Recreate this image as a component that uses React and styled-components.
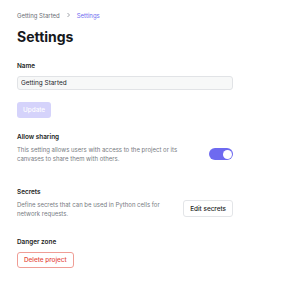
import React from "react";
import styled, { createGlobalStyle } from "styled-components";

const GlobalStyle = createGlobalStyle`
  body {
    margin: 0;
    background: #ffffff;
    font-family: Inter, "Noto Sans", sans-serif;
    -webkit-font-smoothing: antialiased;
  }
`;

const Page = styled.div`
  width: 216px;
  padding: 10px 17px 20px;
  display: flex;
  flex-direction: column;
`;

const Breadcrumbs = styled.nav`
  display: flex;
  align-items: center;
  gap: 6px;
  height: 10px;
  font-size: 6px;
  color: #6b6f76;
`;

const Crumb = styled.span`
  color: ${(p) => (p.$active ? "#6e6af0" : "#6b6f76")};
`;

const Title = styled.h1`
  margin: 7px 0 0;
  font-size: 14px;
  line-height: 20px;
  font-weight: 700;
  color: #16181d;
`;

const Section = styled.section`
  margin-top: ${(p) => p.$gap || 0}px;
  display: flex;
  flex-direction: column;
`;

const Label = styled.div`
  font-size: 6.4px;
  line-height: 10px;
  font-weight: 600;
  color: #1c1e23;
`;

const Input = styled.input`
  margin-top: 5px;
  box-sizing: border-box;
  width: 216px;
  height: 14px;
  padding: 0 3px;
  border: 1px solid #e1e3e6;
  border-radius: 3px;
  background: #f7f8f8;
  font-family: inherit;
  font-size: 6.4px;
  color: #23252a;
  outline: none;
`;

const Button = styled.button`
  box-sizing: border-box;
  height: ${(p) => p.$h || 16}px;
  padding: 0 ${(p) => p.$px || 5}px;
  border-radius: 3px;
  font-family: inherit;
  font-size: 6.4px;
  font-weight: 500;
  white-space: nowrap;
  cursor: pointer;
  border: 1px solid ${(p) => p.$border || "transparent"};
  background: ${(p) => p.$bg || "#ffffff"};
  color: ${(p) => p.$color || "#1c1e23"};
  align-self: flex-start;
  flex-shrink: 0;
`;

const Row = styled.div`
  margin-top: 3px;
  display: flex;
  align-items: center;
  justify-content: space-between;
`;

const Description = styled.p`
  margin: 0;
  width: 170px;
  font-size: 6px;
  line-height: 9px;
  color: #777b82;
`;

const Toggle = styled.span`
  position: relative;
  width: 24px;
  height: 12px;
  border-radius: 6px;
  background: #6e6af0;
  flex-shrink: 0;
`;

const Knob = styled.span`
  position: absolute;
  right: 1.5px;
  top: 1.5px;
  width: 9px;
  height: 9px;
  border-radius: 50%;
  background: #ffffff;
`;

const Chevron = () => (
  <svg width="5" height="6" viewBox="0 0 5 6" fill="none">
    <path d="M1.5 1l2 2-2 2" stroke="#8a8e95" strokeWidth="0.8" />
  </svg>
);

export default function App() {
  return (
    <>
      <GlobalStyle />
      <Page>
        <Breadcrumbs>
          <Crumb>Getting Started</Crumb>
          <Chevron />
          <Crumb $active>Settings</Crumb>
        </Breadcrumbs>
        <Title>Settings</Title>

        <Section $gap={14}>
          <Label>Name</Label>
          <Input defaultValue="Getting Started" />
          <Button
            style={{ marginTop: 12 }}
            $bg="#d5d3fb"
            $color="#ffffff"
            $h={16}
            $px={5}
          >
            Update
          </Button>
        </Section>

        <Section $gap={14}>
          <Label>Allow sharing</Label>
          <Row>
            <Description>
              This setting allows users with access to the project or its
              canvases to share them with others.
            </Description>
            <Toggle>
              <Knob />
            </Toggle>
          </Row>
        </Section>

        <Section $gap={24}>
          <Label>Secrets</Label>
          <Row>
            <Description>
              Define secrets that can be used in Python cells for network
              requests.
            </Description>
            <Button $border="#e3e5e8" $h={17} $px={6}>
              Edit secrets
            </Button>
          </Row>
        </Section>

        <Section $gap={19}>
          <Label>Danger zone</Label>
          <Button
            style={{ marginTop: 5 }}
            $border="#ef9d95"
            $color="#e5493c"
            $h={16}
            $px={6}
          >
            Delete project
          </Button>
        </Section>
      </Page>
    </>
  );
}
